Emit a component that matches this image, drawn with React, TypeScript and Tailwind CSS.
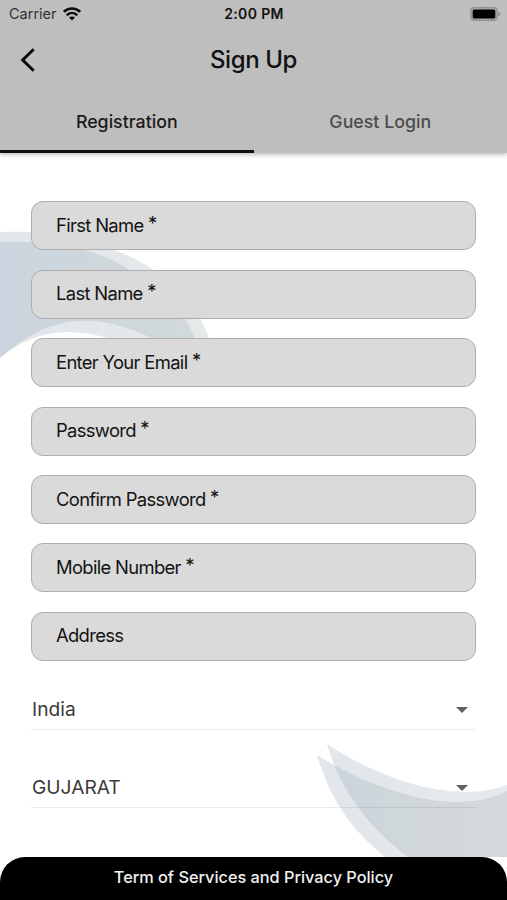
const fields = [
  { label: 'First Name', required: true },
  { label: 'Last Name', required: true },
  { label: 'Enter Your Email', required: true },
  { label: 'Password', required: true },
  { label: 'Confirm Password', required: true },
  { label: 'Mobile Number', required: true },
  { label: 'Address', required: false },
]

function StatusBar() {
  return (
    <div className="grid grid-cols-[1fr_auto_1fr] items-center h-7 pl-[9px] pr-[6px] text-[#111]">
      <div className="flex items-center gap-[6px]">
        <span className="text-[14.5px] leading-none text-[#333]">Carrier</span>
        <svg width="18" height="14" viewBox="0 0 18 14" fill="none" stroke="#0a0a0a" strokeWidth="2.6">
          <path d="M0.8 4.9C5.4 0.4 12.6 0.4 17.2 4.9" />
          <path d="M3.7 8.2C6.8 5.3 11.2 5.3 14.3 8.2" />
          <path d="M9 13.4L6 10.5C7.7 9 10.3 9 12 10.5Z" fill="#0a0a0a" stroke="none" />
        </svg>
      </div>
      <span className="pr-[2px] text-center text-[14px] leading-none font-semibold tracking-[0.025em]">2:00 PM</span>
      <svg className="justify-self-end" width="31" height="14" viewBox="0 0 31 14">
        <rect x="0.7" y="0.7" width="26.6" height="12.6" rx="3.6" fill="#a9a9a9" stroke="#909090" strokeWidth="1.2" />
        <rect x="2.7" y="2.4" width="22.6" height="9.2" rx="1.6" fill="#000" />
        <path d="M28.6 4.8C30.6 5.4 30.6 8.6 28.6 9.2Z" fill="#858585" />
      </svg>
    </div>
  )
}

function Waves() {
  return (
    <svg className="absolute inset-0" width="507" height="900" viewBox="0 0 507 900" fillOpacity="0.26">
      <defs>
        <linearGradient id="top" x1="0" x2="1">
          <stop offset="0" stopColor="#8c9fb5" />
          <stop offset="1" stopColor="#9aabad" />
        </linearGradient>
        <linearGradient id="bottom" x1="0" x2="1">
          <stop offset="0" stopColor="#8c9fb3" />
          <stop offset="0.4" stopColor="#95a5ad" />
          <stop offset="1" stopColor="#9faab6" />
        </linearGradient>
      </defs>
      <g fill="url(#top)">
        <path d="M0 232C50 230 108 240 154 270C182 288 199 311 209 338V360H190Q125 317 78 321Q39 323 0 358Z" />
        <path d="M0 242C48 240 92 246 130 270C164 290 184 312 195 338V360H165Q105 331 65 332Q30 333 0 358Z" />
      </g>
      <g fill="url(#bottom)">
        <path d="M327 744C370 772 418 791 465 792Q487 792 507 785V857H408C368 827 340 790 327 744Z" />
        <path d="M317 755C360 782 412 801 455 802Q484 803 507 791V857H385C347 826 330 797 317 755Z" />
      </g>
    </svg>
  )
}

function Select({ value }: { value: string }) {
  return (
    <div className="flex items-center justify-between h-[39px] pr-2 border-b border-black/8">
      <span className="pl-px text-[19.2px] leading-none text-[#3a3a3a]">{value}</span>
      <svg width="12" height="6" viewBox="0 0 12 6">
        <path d="M0 0H12L6 6Z" fill="#606164" />
      </svg>
    </div>
  )
}

export default function App() {
  return (
    <div className="relative flex flex-col w-[507px] h-[900px] overflow-hidden bg-white font-['Inter',sans-serif]">
      <Waves />
      <header className="relative flex flex-col h-[153px] bg-[#bebebe] shadow-[0_1px_5px_rgba(0,0,0,0.35)]">
        <StatusBar />
        <div className="grid grid-cols-[1fr_auto_1fr] items-center h-16 px-5">
          <svg width="16" height="24" viewBox="0 0 16 24" fill="none" stroke="#0a0a0a" strokeWidth="3">
            <path d="M13.7 1.2L2.7 12L13.7 22.8" />
          </svg>
          <h1 className="text-[24px] leading-none font-medium tracking-[-0.017em] text-[#111]">Sign Up</h1>
        </div>
        <nav className="grid grid-cols-2 grow text-center text-[17.8px] font-medium">
          <div className="flex items-center justify-center pt-[3px] border-b-[3px] border-[#111] text-[#1a1a1a]">Registration</div>
          <div className="flex items-center justify-center pt-[3px] border-b-[3px] border-transparent text-[#4c4c4c]">Guest Login</div>
        </nav>
      </header>
      <main className="relative flex flex-col grow px-[31px] pt-[48.4px]">
        <div className="flex flex-col gap-[19.4px]">
          {fields.map((field) => (
            <div
              key={field.label}
              className="flex items-center h-[49px] px-6 rounded-xl border-[1.5px] border-[#adadad] bg-[#dadada] text-[18.4px] tracking-[-0.036em] whitespace-pre text-[#141414]"
            >
              {field.label}
              {field.required && <span className="pb-1"> *</span>}
            </div>
          ))}
        </div>
        <div className="flex flex-col gap-[39px] pt-[30.2px]">
          <Select value="India" />
          <Select value="GUJARAT" />
        </div>
      </main>
      <footer className="relative flex items-center justify-center h-[43px] pb-[3px] rounded-t-[25px] bg-black text-[16.3px] font-medium text-[#f1f1f1]">
        Term of Services and Privacy Policy
      </footer>
    </div>
  )
}
